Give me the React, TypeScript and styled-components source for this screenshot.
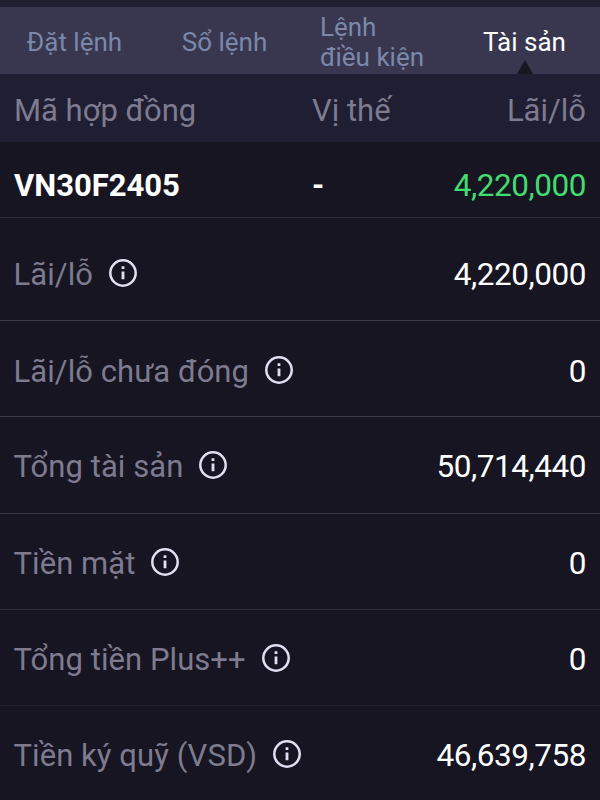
import React from "react";
import styled, { createGlobalStyle } from "styled-components";

const GlobalStyle = createGlobalStyle`
  * { box-sizing: border-box; }
  body { margin: 0; background: #161521; font-family: Roboto, "Noto Sans", sans-serif; }
`;

const Screen = styled.main`
  width: 600px;
  height: 800px;
  overflow: hidden;
  background: #161521;
`;

const TopEdge = styled.div`
  height: 7px;
  background: #201e31;
`;

const Tabs = styled.nav`
  display: grid;
  grid-template-columns: repeat(4, 150px);
  height: 67px;
  background: #39374f;
`;

const Tab = styled.div<{ $active?: boolean; $wrapped?: boolean }>`
  position: relative;
  display: flex;
  align-items: center;
  justify-content: center;
  padding-top: 2px;
  padding-right: ${(p) => (p.$wrapped ? 6 : 1)}px;
  font-size: 26px;
  line-height: 30px;
  white-space: pre;
  color: ${(p) => (p.$active ? "#ffffff" : "#7b88aa")};
`;

const Pointer = styled.svg`
  position: absolute;
  left: 67px;
  bottom: 0;
`;

const Header = styled.div`
  display: grid;
  grid-template-columns: 298px 78px 1fr;
  align-items: center;
  height: 68px;
  padding: 4px 14px 0 14px;
  background: #201e32;
  color: #7e7b8f;
  font-size: 31px;
  white-space: nowrap;
`;

const Contract = styled(Header)`
  height: 76px;
  padding-top: 11px;
  background: transparent;
  border-bottom: 1px solid #2d2c38;
  color: #fff;
`;

const Cell = styled.span<{ $right?: boolean; $bold?: boolean }>`
  text-align: ${(p) => (p.$right ? "right" : "left")};
  font-weight: ${(p) => (p.$bold ? 700 : 400)};
`;

const Row = styled.div<{ $height: number; $top: number; $line: string }>`
  display: flex;
  align-items: center;
  justify-content: space-between;
  height: ${(p) => p.$height}px;
  padding: ${(p) => p.$top}px 14px 0 13.5px;
  border-bottom: 1px solid ${(p) => p.$line};
  font-size: 31px;
`;

const Label = styled.div`
  display: flex;
  align-items: center;
  gap: 15px;
  color: #7e7b8f;
  letter-spacing: 0.06px;
`;

const Value = styled.span<{ $gain?: boolean }>`
  color: ${(p) => (p.$gain ? "#42dc70" : "#fff")};
  font-size: 31.5px;
  letter-spacing: -0.45px;
  text-align: right;
`;

const Info = styled.svg`
  flex: none;
  margin-bottom: 3px;
`;

const InfoIcon = () => (
  <Info width="30" height="30" viewBox="0 0 30 30" fill="none">
    <circle cx="15" cy="15" r="12.7" stroke="#e2dff2" strokeWidth="2.5" />
    <path d="M15 13.6v7.6M15 8.2v2.8" stroke="#e2dff2" strokeWidth="2.8" />
  </Info>
);

const rows = [
  { label: "Lãi/lỗ", value: "4,220,000", height: 103, top: 11, line: "#3b3a46" },
  { label: "Lãi/lỗ chưa đóng", value: "0", height: 96, top: 5, line: "#3b3a46" },
  { label: "Tổng tài sản", value: "50,714,440", height: 97, top: 3, line: "#373642" },
  { label: "Tiền mặt", value: "0", height: 96, top: 4, line: "#2c2b37" },
  { label: "Tổng tiền Plus++", value: "0", height: 96, top: 4, line: "#22212d" },
  { label: "Tiền ký quỹ (VSD)", value: "46,639,758", height: 97, top: 3, line: "#22212d" },
];

export default function App() {
  return (
    <Screen>
      <GlobalStyle />
      <TopEdge />
      <Tabs>
        <Tab>Đặt lệnh</Tab>
        <Tab>Sổ lệnh</Tab>
        <Tab $wrapped>{"Lệnh\nđiều kiện"}</Tab>
        <Tab $active>
          Tài sản
          <Pointer width="16" height="14" viewBox="0 0 16 14">
            <path d="M8 0 16 14H0Z" fill="#171623" />
          </Pointer>
        </Tab>
      </Tabs>
      <Header>
        <Cell>Mã hợp đồng</Cell>
        <Cell>Vị thế</Cell>
        <Cell $right>Lãi/lỗ</Cell>
      </Header>
      <Contract>
        <Cell $bold>VN30F2405</Cell>
        <Cell $bold>-</Cell>
        <Value $gain>4,220,000</Value>
      </Contract>
      {rows.map((row) => (
        <Row key={row.label} $height={row.height} $top={row.top} $line={row.line}>
          <Label>
            {row.label}
            <InfoIcon />
          </Label>
          <Value>{row.value}</Value>
        </Row>
      ))}
    </Screen>
  );
}
